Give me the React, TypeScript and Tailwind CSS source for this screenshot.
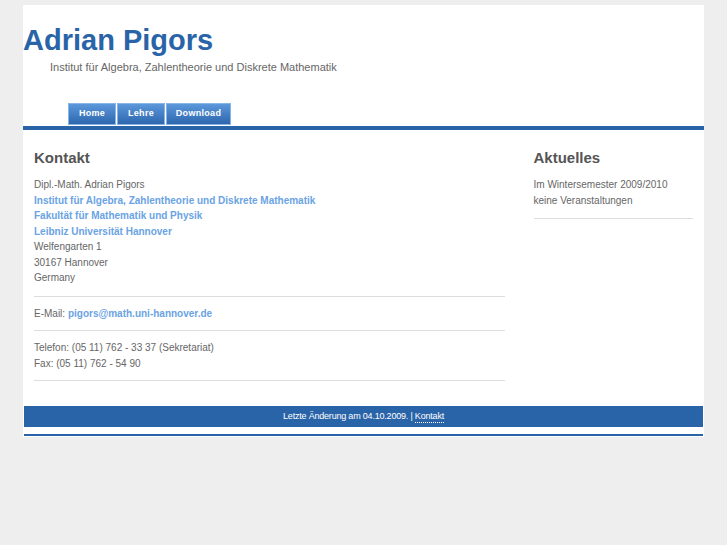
const Tab = ({ label, w }: { label: string; w: string }) => (
    <a
        href="#"
        className={`${w} h-[22px] flex items-center justify-center border border-[#8ab4e6] bg-gradient-to-b from-[#5c98dc] to-[#2d67ae] text-white text-[9px] font-bold tracking-[0.3px]`}
    >
        {label}
    </a>
)

const App = () => {
    return (
        <div className="min-h-[545px] bg-[#eeeeee] pt-[5px] font-['Liberation_Sans',Arial,sans-serif]">
            <div className="mx-auto w-[681px] bg-white pb-[1px]">
                {/* Header */}
                <div className="h-[121px] flex flex-col">
                    <h1 className="pt-[19px] text-[29px] leading-[32px] font-bold text-[#2a64a8]">
                        Adrian Pigors
                    </h1>
                    <p className="pl-[27px] pt-[4px] text-[11px] leading-[14px] text-[#666666]">
                        Institut für Algebra, Zahlentheorie und Diskrete Mathematik
                    </p>
                    <div className="mt-auto flex pl-[45px] gap-[1px] pb-[1px]">
                        <Tab label="Home" w="w-[48px]" />
                        <Tab label="Lehre" w="w-[48px]" />
                        <Tab label="Download" w="w-[65px]" />
                    </div>
                </div>
                <div className="h-[4px] bg-[#2a64a8]" />

                {/* Content */}
                <div className="flex px-[11px] pt-[19px] pb-[25px] text-[10px] leading-[15.5px] text-[#666666]">
                    <div className="w-[472px]">
                        <h2 className="text-[15px] leading-[18px] font-bold text-[#555555] mb-[10px]">
                            Kontakt
                        </h2>
                        <p>Dipl.-Math. Adrian Pigors</p>
                        <p className="font-bold text-[#6aa3e4]">
                            <a href="#">Institut für Algebra, Zahlentheorie und Diskrete Mathematik</a>
                        </p>
                        <p className="font-bold text-[#6aa3e4]">
                            <a href="#">Fakultät für Mathematik und Physik</a>
                        </p>
                        <p className="font-bold text-[#6aa3e4]">
                            <a href="#">Leibniz Universität Hannover</a>
                        </p>
                        <p>Welfengarten 1</p>
                        <p>30167 Hannover</p>
                        <p>Germany</p>
                        <hr className="mt-[10px] border-t border-[#dddddd]" />
                        <p className="py-[9px]">
                            E-Mail:{' '}
                            <a href="#" className="font-bold text-[#6aa3e4]">
                                pigors@math.uni-hannover.de
                            </a>
                        </p>
                        <hr className="border-t border-[#dddddd]" />
                        <div className="py-[9px]">
                            <p>Telefon: (05 11) 762 - 33 37 (Sekretariat)</p>
                            <p>Fax: (05 11) 762 - 54 90</p>
                        </div>
                        <hr className="border-t border-[#dddddd]" />
                    </div>
                    <div className="ml-[29px] w-[160px]">
                        <h2 className="text-[15px] leading-[18px] font-bold text-[#555555] mb-[10px]">
                            Aktuelles
                        </h2>
                        <p>Im Wintersemester 2009/2010</p>
                        <p>keine Veranstaltungen</p>
                        <hr className="mt-[10px] border-t border-[#dddddd]" />
                    </div>
                </div>

                {/* Footer */}
                <div className="mx-[1px] h-[21px] flex items-center justify-center bg-[#2a64a8] text-white text-[9px] tracking-[-0.2px]">
                    Letzte Änderung am 04.10.2009. |&nbsp;
                    <a href="#" className="border-b border-dotted border-white leading-[11px]">
                        Kontakt
                    </a>
                </div>
                <div className="mx-[1px] mt-[7px] h-[2px] bg-[#2a64a8]" />
            </div>
        </div>
    )
}

export default App
